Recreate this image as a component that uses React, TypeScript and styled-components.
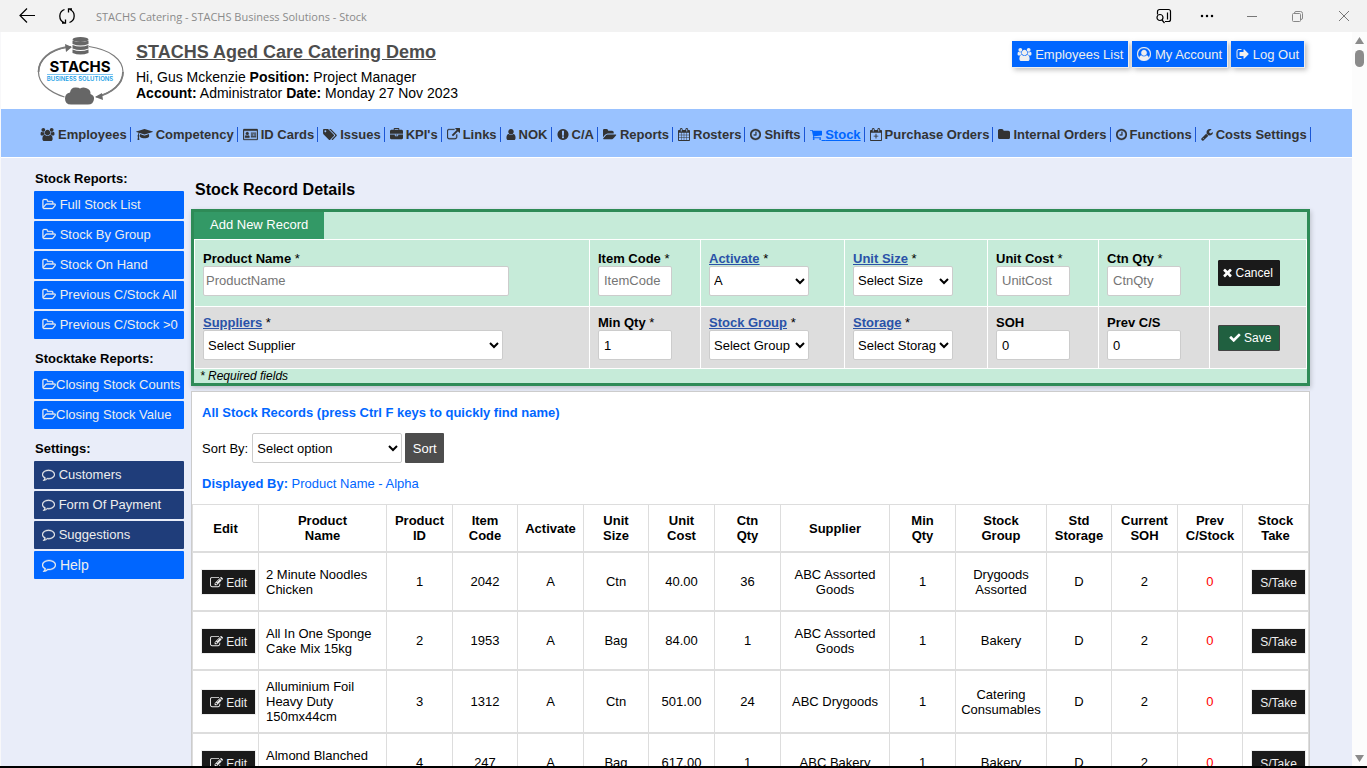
import React from 'react';
import styled, { createGlobalStyle, css } from 'styled-components';

const GlobalStyle = createGlobalStyle`
  *, *::before, *::after { box-sizing: border-box; }
  html, body { margin: 0; padding: 0; }
  body {
    font-family: "Liberation Sans", Arial, sans-serif;
    font-size: 13px;
    line-height: 15px;
    color: #000;
    background: #e9edf9;
    overflow: hidden;
  }
  button, input, select { font-family: inherit; font-size: 13px; }
`;

/* ---------- icons ---------- */

type Glyph = { x: number; w: number; d: string; evenOdd?: boolean; outline?: number };

const glyphs: Record<string, Glyph> = {
  users: { x: 0, w: 2048, d: 'M657 896q-162 5-265 128h-134q-82 0-138-40.5t-56-118.5q0-353 124-353 6 0 43.5 21t97.5 42.5 119 21.5q67 0 133-23-5 37-5 66 0 159 93 256zm1071 637q0 120-73 189.5t-194 69.5h-874q-121 0-194-69.5t-73-189.5q0-53 3.5-103.5t14-109 26.5-108.5 43-97.5 62-81 85.5-53.5 111.5-20q10 0 43 21.5t73 48 107 48 135 21.5 135-21.5 107-48 73-48 43-21.5q61 0 111.5 20t85.5 53.5 62 81 43 97.5 26.5 108.5 14 109 3.5 103.5zm-1024-1277q0 106-75 181t-181 75-181-75-75-181 75-181 181-75 181 75 75 181zm704 384q0 159-112.5 271.5t-271.5 112.5-271.5-112.5-112.5-271.5 112.5-271.5 271.5-112.5 271.5 112.5 112.5 271.5zm576 225q0 78-56 118.5t-138 40.5h-134q-103-123-265-128 93-97 93-256 0-29-5-66 66 23 133 23 59 0 119-21.5t97.5-42.5 43.5-21q124 0 124 353zm-128-609q0 106-75 181t-181 75-181-75-75-181 75-181 181-75 181 75 75 181z' },
  gradCap: { x: 0, w: 2304, d: 'M1774 836l18 316q4 69-82 128t-235 93.5-323 34.5-323-34.5-235-93.5-82-128l18-316 574 181q22 7 48 7t48-7zm530-324q0 23-22 31l-1120 352q-4 1-10 1t-10-1l-652-206q-43 34-71 111.5t-34 178.5q63 36 63 109 0 69-58 107l58 433q2 14-8 25-9 11-24 11h-192q-15 0-24-11-10-11-8-25l58-433q-58-38-58-107 0-73 65-111 11-207 98-330l-333-104q-22-8-22-31t22-31l1120-352q4-1 10-1t10 1l1120 352q22 8 22 31z' },
  idCard: { x: 0, w: 2048, evenOdd: true, outline: 40, d: 'M160 128h1728q66 0 113 47t47 113v1216q0 66-47 113t-113 47h-1728q-66 0-113-47t-47-113v-1216q0-66 47-113t113-47zM128 384v1120q0 32 32 32h1728q32 0 32-32v-1120zM256 1256q0-230 140-270 80 74 180 74t180-74q140 40 140 270 0 88-80 88h-480q-80 0-80-88zM576 560a208 208 0 1 0 1 0zM1088 1152h704v128h-704zM1088 896h320v128h-320zM1536 896h256v128h-256zM1088 640h704v128h-704z' },
  tags: { x: 0, w: 1920, d: 'M448 448q0-53-37.5-90.5t-90.5-37.5-90.5 37.5-37.5 90.5 37.5 90.5 90.5 37.5 90.5-37.5 37.5-90.5zm1067 576q0 53-37 90l-491 492q-39 37-91 37-53 0-90-37l-715-716q-38-37-64.5-101t-26.5-117v-416q0-52 38-90t90-38h416q53 0 117 26.5t102 64.5l715 714q37 39 37 91zm384 0q0 53-37 90l-491 492q-39 37-91 37-36 0-59-14t-53-45l470-470q37-37 37-90 0-52-37-91l-715-714q-38-38-102-64.5t-117-26.5h224q53 0 117 26.5t102 64.5l715 714q37 39 37 91z' },
  briefcase: { x: 0, w: 1792, d: 'M640 256h512v-128h-512v128zm1152 640v480q0 66-47 113t-113 47h-1472q-66 0-113-47t-47-113v-480h672v160q0 26 19 45t45 19h320q26 0 45-19t19-45v-160h672zm-768 0v128h-256v-128h256zm768-480v384h-1792v-384q0-66 47-113t113-47h352v-160q0-40 28-68t68-28h576q40 0 68 28t28 68v160h352q66 0 113 47t47 113z' },
  link: { x: 0, w: 1792, outline: 40, d: 'M1408 928v320q0 119-84.5 203.5t-203.5 84.5h-832q-119 0-203.5-84.5t-84.5-203.5v-832q0-119 84.5-203.5t203.5-84.5h704q14 0 23 9t9 23v64q0 14-9 23t-23 9h-704q-66 0-113 47t-47 113v832q0 66 47 113t113 47h832q66 0 113-47t47-113v-320q0-14 9-23t23-9h64q14 0 23 9t9 23zm384-864v512q0 26-19 45t-45 19-45-19l-176-176-652 652q-10 10-23 10t-23-10l-114-114q-10-10-10-23t10-23l652-652-176-176q-19-19-19-45t19-45 45-19h512q26 0 45 19t19 45z' },
  user: { x: 192, w: 1408, d: 'M1536 1399q0 109-62.5 187t-150.5 78h-854q-88 0-150.5-78t-62.5-187q0-85 8.5-160.5t31.5-152 58.5-131 94-89 134.5-34.5q131 128 313 128t313-128q76 0 134.5 34.5t94 89 58.5 131 31.5 152 8.5 160.5zm-256-887q0 159-112.5 271.5t-271.5 112.5-271.5-112.5-112.5-271.5 112.5-271.5 271.5-112.5 271.5 112.5 112.5 271.5z' },
  alert: { x: 64, w: 1664, d: 'M896 128q209 0 385.5 103t279.5 279.5 103 385.5-103 385.5-279.5 279.5-385.5 103-385.5-103-279.5-279.5-103-385.5 103-385.5 279.5-279.5 385.5-103zm128 1247v-190q0-14-9-23.5t-22-9.5h-192q-13 0-23 10t-10 23v190q0 13 10 23t23 10h192q13 0 22-9.5t9-23.5zm-2-344l18-621q0-12-10-18-10-8-24-8h-220q-14 0-24 8-10 6-10 18l17 621q0 10 10 17.5t24 7.5h185q14 0 23.5-7.5t10.5-17.5z' },
  folderOpen: { x: 0, w: 1920, d: 'M1815 952q0 31-31 66l-336 396q-43 51-120.5 86.5t-143.5 35.5h-1088q-34 0-60.5-13t-26.5-43q0-31 31-66l336-396q43-51 120.5-86.5t143.5-35.5h1088q34 0 60.5 13t26.5 43zm-343-344v160h-832q-94 0-197 47.5t-164 119.5l-337 396-5 6q0-4-.5-12.5t-.5-12.5v-960q0-92 66-158t158-66h320q92 0 158 66t66 158v32h544q92 0 158 66t66 158z' },
  folder: { x: 64, w: 1664, d: 'M1728 608v704q0 92-66 158t-158 66h-1216q-92 0-158-66t-66-158v-960q0-92 66-158t158-66h320q92 0 158 66t66 158v32h672q92 0 158 66t66 158z' },
  folderOutline: { x: 0, w: 1984, outline: 50, d: 'M1845 931q0-35-53-35h-1088q-40 0-85.5 21.5t-71.5 52.5l-294 363q-18 24-18 40 0 35 53 35h1088q40 0 86-22t71-53l294-363q18-22 18-39zm-1141-163h768v-160q0-40-28-68t-68-28h-576q-40 0-68-28t-28-68v-64q0-40-28-68t-68-28h-320q-40 0-68 28t-28 68v853l256-315q44-53 116-87.5t140-34.5zm1269 163q0 62-46 120l-295 363q-43 53-116 87.5t-140 34.5h-1088q-92 0-158-66t-66-158v-960q0-92 66-158t158-66h320q92 0 158 66t66 158v32h544q92 0 158 66t66 158v160h192q54 0 99 24.5t67 70.5q15 32 15 68z' },
  calendar: { x: 64, w: 1664, evenOdd: true, d: 'M192 256h128v-96q0-66 47-113t113-47h64q66 0 113 47t47 113v96h384v-96q0-66 47-113t113-47h64q66 0 113 47t47 113v96h128q52 0 90 38t38 90v1280q0 52-38 90t-90 38h-1408q-52 0-90-38t-38-90v-1280q0-52 38-90t90-38zM192 1664h288v-288h-288zM544 1664h320v-288h-320zM928 1664h320v-288h-320zM1312 1664h288v-288h-288zM192 1312h288v-320h-288zM544 1312h320v-320h-320zM928 1312h320v-320h-320zM1312 1312h288v-320h-288zM192 928h288v-288h-288zM544 928h320v-288h-320zM928 928h320v-288h-320zM1312 928h288v-288h-288zM448 160v288q0 32 32 32h64q32 0 32-32v-288q0-32-32-32h-64q-32 0-32 32zM1216 160v288q0 32 32 32h64q32 0 32-32v-288q0-32-32-32h-64q-32 0-32 32z' },
  calendarPlus: { x: 64, w: 1664, evenOdd: true, d: 'M192 256h128v-96q0-66 47-113t113-47h64q66 0 113 47t47 113v96h384v-96q0-66 47-113t113-47h64q66 0 113 47t47 113v96h128q52 0 90 38t38 90v1280q0 52-38 90t-90 38h-1408q-52 0-90-38t-38-90v-1280q0-52 38-90t90-38zM192 640v1024h1408v-1024zM448 160v288q0 32 32 32h64q32 0 32-32v-288q0-32-32-32h-64q-32 0-32 32zM1216 160v288q0 32 32 32h64q32 0 32-32v-288q0-32-32-32h-64q-32 0-32 32zM832 800h128v256h256v128h-256v256h-128v-256h-256v-128h256z' },
  clock: { x: 128, w: 1536, outline: 40, d: 'M1024 544v448q0 14-9 23t-23 9h-320q-14 0-23-9t-9-23v-64q0-14 9-23t23-9h224v-352q0-14 9-23t23-9h64q14 0 23 9t9 23zm416 352q0-148-73-273t-198-198-273-73-273 73-198 198-73 273 73 273 198 198 273 73 273-73 198-198 73-273zm224 0q0 209-103 385.5t-279.5 279.5-385.5 103-385.5-103-279.5-279.5-103-385.5 103-385.5 279.5-279.5 385.5-103 385.5 103 279.5 279.5 103 385.5z' },
  cart: { x: 64, w: 1664, d: 'M704 1536q0 52-38 90t-90 38-90-38-38-90 38-90 90-38 90 38 38 90zm896 0q0 52-38 90t-90 38-90-38-38-90 38-90 90-38 90 38 38 90zm128-1088v512q0 24-16.5 42.5t-40.5 21.5l-1044 122q13 60 13 70 0 16-24 64h920q26 0 45 19t19 45-19 45-45 19h-1024q-26 0-45-19t-19-45q0-11 8-31.5t16-36 21.5-40 15.5-29.5l-177-823h-204q-26 0-45-19t-19-45 19-45 45-19h256q16 0 28.5 6.5t19.5 15.5 13 24.5 8 26 5.5 29.5 4.5 26h1201q26 0 45 19t19 45z' },
  wrench: { x: 64, w: 1664, d: 'M448 1472q0-26-19-45t-45-19-45 19-19 45 19 45 45 19 45-19 19-45zm644-420l-682 682q-37 37-90 37-52 0-91-37l-106-108q-38-36-38-90 0-53 38-91l681-681q39 98 114.5 173.5t173.5 114.5zm634-435q0 39-23 106-47 134-164.5 217.5t-258.5 83.5q-185 0-316.5-131.5t-131.5-316.5 131.5-316.5 316.5-131.5q58 0 121.5 16.5t107.5 46.5q16 11 16 28t-16 28l-293 169v224l193 107q5-3 79-48.5t135.5-81 70.5-35.5q15 0 23.5 10t8.5 25z' },
  comment: { x: 0, w: 1792, outline: 50, d: 'M896 384q-204 0-381.5 69.5t-282 187.5-104.5 255q0 112 71.5 213.5t201.5 175.5l87 50-27 96q-24 91-70 172 152-63 275-171l43-38 57 6q69 8 130 8 204 0 381.5-69.5t282-187.5 104.5-255-104.5-255-282-187.5-381.5-69.5zm896 512q0 174-120 321.5t-326 233-450 85.5q-70 0-145-8-198 175-460 242-49 14-114 22h-5q-15 0-27-10.5t-16-27.5v-1q-3-4-.5-12t2-10 4.5-9.5l6-9 7-8.5 8-9q7-8 31-34.5t34.5-38 31-39.5 32.5-51 27-59 26-76q-157-89-247.5-220t-90.5-281q0-130 71-248.5t191-204.5 286-136.5 348-50.5 348 50.5 286 136.5 191 204.5 71 248.5z' },
  edit: { x: 0, w: 1792, d: 'M888 1184l116-116-152-152-116 116v56h96v96h56zm440-720q-16-16-33 1l-350 350q-17 17-1 33t33-1l350-350q17-17 1-33zm80 594v190q0 119-84.5 203.5t-203.5 84.5h-832q-119 0-203.5-84.5t-84.5-203.5v-832q0-119 84.5-203.5t203.5-84.5h832q63 0 117 25 15 7 18 23 3 17-9 29l-49 49q-14 14-32 8-23-6-45-6h-832q-66 0-113 47t-47 113v832q0 66 47 113t113 47h832q66 0 113-47t47-113v-126q0-13 9-22l64-64q15-15 35-7t20 29zm-96-738l288 288-672 672h-288v-288zm444 132l-92 92-288-288 92-92q28-28 68-28t68 28l152 152q28 28 28 68t-28 68z' },
  check: { x: 64, w: 1664, d: 'M1671 566q0 40-28 68l-724 724-136 136q-28 28-68 28t-68-28l-136-136-362-362q-28-28-28-68t28-68l136-136q28-28 68-28t68 28l294 295 656-657q28-28 68-28t68 28l136 136q28 28 28 68z' },
  times: { x: 256, w: 1280, d: 'M1490 1322q0 40-28 68l-136 136q-28 28-68 28t-68-28l-294-294-294 294q-28 28-68 28t-68-28l-136-136q-28-28-28-68t28-68l294-294-294-294q-28-28-28-68t28-68l136-136q28-28 68-28t68 28l294 294 294-294q28-28 68-28t68 28l136 136q28 28 28 68t-28 68l-294 294 294 294q28 28 28 68z' },
  signOut: { x: 0, w: 1664, d: 'M704 1440q0 4 1 20t.5 26.5-3 23.5-10 19.5-20.5 6.5h-320q-119 0-203.5-84.5t-84.5-203.5v-704q0-119 84.5-203.5t203.5-84.5h320q13 0 22.5 9.5t9.5 22.5q0 4 1 20t.5 26.5-3 23.5-10 19.5-20.5 6.5h-320q-66 0-113 47t-47 113v704q0 66 47 113t113 47h312l11.5 1 11.5 3 8 5.5 7 9 2 13.5zm928-544q0 26-19 45l-544 544q-19 19-45 19t-45-19-19-45v-288h-448q-26 0-45-19t-19-45v-384q0-26 19-45t45-19h448v-288q0-26 19-45t45-19 45 19l544 544q19 19 19 45z' },
  userCircle: { x: 0, w: 1792, evenOdd: true, outline: 40, d: 'M896 0a896 896 0 1 0 1 0zM896 128a768 768 0 0 1 600 1247q-70-303-274-303-130 128-326 128t-326-128q-204 0-274 303a768 768 0 0 1 600-1247zM896 384a352 352 0 1 0 1 0z' },
};

const Svg = styled.svg`
  flex: none;
  vertical-align: -2px;
  fill: currentColor;
  stroke: currentColor;
`;

function Icon({ name, size = 13 }: { name: string; size?: number }) {
  const g = glyphs[name];
  return (
    <Svg
      width={Math.round((g.w / 1792) * size)}
      height={size}
      viewBox={`${g.x} 0 ${g.w} 1792`}
      strokeWidth={g.outline ?? 0}
      aria-hidden="true"
    >
      <path d={g.d} fillRule={g.evenOdd ? 'evenodd' : 'nonzero'} />
    </Svg>
  );
}

/* ---------- window frame ---------- */

const Window = styled.div`
  height: 100vh;
  display: flex;
  flex-direction: column;
  overflow: hidden;
  border-bottom: 2px solid #000;
`;

const TitleBar = styled.div`
  flex: none;
  display: flex;
  align-items: center;
  height: 32px;
  padding: 0 17px 0 19px;
  background: #f2f2f2;
`;

const FrameButton = styled.button<{ $gap: number }>`
  display: flex;
  align-items: center;
  padding: 0;
  margin: 0 ${(p) => p.$gap}px 0 0;
  border: 0;
  background: none;
  svg { fill: none; stroke: currentColor; }
`;

const WindowTitle = styled.span`
  flex: 1;
  font-family: "Open Sans", "Noto Sans", sans-serif;
  font-size: 11px;
  color: #8a8a8a;
  white-space: nowrap;
`;

const Viewport = styled.div`
  flex: 1;
  min-height: 0;
  display: flex;
`;

const Page = styled.div`
  flex: 1;
  min-width: 0;
  overflow: hidden;
  border-left: 1px solid #f8f8fa;
`;

const ScrollTrack = styled.div`
  flex: none;
  width: 15px;
  display: flex;
  flex-direction: column;
  align-items: center;
  padding: 5px 0 4px;
  background: #fcfcfc;
`;

const ScrollThumb = styled.div`
  width: 9px;
  height: 17px;
  margin: 6px 0 auto;
  border-radius: 5px;
  background: #8b8b8b;
`;

/* ---------- page header ---------- */

const Header = styled.header`
  display: flex;
  align-items: flex-start;
  height: 77px;
  padding: 5px 47px 0 36px;
  background: #fff;
`;

const Identity = styled.div`
  flex: 1;
  margin: 5px 0 0 12px;
  font-size: 14px;
  line-height: 16px;
  white-space: nowrap;
`;

const SiteTitle = styled.h1`
  margin: 0 0 6px;
  font-size: 18px;
  line-height: 21px;
  a { color: #4d4d4d; }
`;

const HeaderActions = styled.div`
  display: flex;
  gap: 3px;
  padding-top: 4px;
`;

const HeaderButton = styled.a`
  height: 27px;
  padding: 6px 5px 0;
  border-right: 1px solid #eee;
  border-bottom: 1px solid #eee;
  background: #06f;
  box-shadow: 2px 2px 5px rgba(0, 0, 0, 0.25);
  color: #eee;
  text-decoration: none;
  white-space: nowrap;
`;

const Nav = styled.nav`
  display: flex;
  height: 49px;
  padding: 18px 0 0 34px;
  border-bottom: 1px solid #fff;
  background: #99c2ff;
`;

const NavLink = styled.a<{ $active?: boolean }>`
  display: ${(p) => (p.$active ? 'block' : 'flex')};
  align-items: center;
  gap: 3px;
  height: 15px;
  padding: 0 3px 0 5px;
  border-right: 1px solid #1a56d6;
  font-weight: bold;
  white-space: nowrap;
  color: ${(p) => (p.$active ? '#0066ff' : '#333')};
  text-decoration: ${(p) => (p.$active ? 'underline' : 'none')};
`;

/* ---------- body ---------- */

const Body = styled.div`
  display: flex;
  padding: 12px 42px 0 33px;
`;

const Sidebar = styled.aside`
  flex: none;
  width: 150px;
  margin-right: 7px;
`;

const SideHeading = styled.h2`
  margin: 0;
  padding: 1px 1px 5px;
  font-size: 13px;
  line-height: 15px;
`;

const SideGroup = styled.section`
  margin-bottom: 11px;
`;

const SideLink = styled.a<{ $dark?: boolean }>`
  display: block;
  height: 28px;
  margin-bottom: 2px;
  padding: 6px 0 0 8px;
  border-radius: 1px;
  background: ${(p) => (p.$dark ? '#1f3d7a' : '#0066ff')};
  color: #eee;
  text-decoration: none;
  white-space: nowrap;
`;

const HelpLink = styled(SideLink)`
  font-size: 14px;
  line-height: 16px;
`;

const Main = styled.main`
  flex: 1;
  min-width: 0;
`;

const PageHeading = styled.h2`
  margin: 0;
  padding: 11px 4px 10px;
  font-size: 16px;
  line-height: 18px;
`;

const FormPanel = styled.form`
  border: 3px solid #2e8b57;
  background: #c6ebd9;
  box-shadow: 1px 2px 5px rgba(0, 0, 0, 0.2);
`;

const FormTab = styled.div`
  width: 130px;
  height: 27px;
  padding: 5px 0 0 16px;
  background: #396;
  color: #fff;
`;

const FormGrid = styled.div`
  display: grid;
  grid-template-columns: 394fr 110fr 143fr 142fr 110fr 110fr 96fr;
  grid-template-rows: 66px 61px;
  gap: 1px;
  border: 1px solid #fff;
  background: #fff;
`;

const Cell = styled.div<{ $alt?: boolean }>`
  display: flex;
  flex-direction: column;
  align-items: flex-start;
  justify-content: center;
  min-width: 0;
  padding-left: 8px;
  background: ${(p) => (p.$alt ? '#dddddd' : '#c6ebd9')};
`;

const FieldLabel = styled.label`
  white-space: nowrap;
  a, span { font-weight: bold; }
  a { color: #2a52a8; }
`;

const control = css`
  height: 30px;
  margin: 0;
  border: 1px solid #ccc;
  border-radius: 2px;
  background-color: #fff;
  color: #000;
`;

const TextInput = styled.input<{ $w: number; $pad?: number }>`
  ${control}
  width: ${(p) => p.$w}px;
  padding: 0 ${(p) => p.$pad ?? 5}px;
  &::placeholder { color: #757575; }
`;

const Select = styled.select<{ $w: number }>`
  ${control}
  width: ${(p) => p.$w}px;
`;

const FormButton = styled.button<{ $save?: boolean }>`
  width: 62px;
  height: 26px;
  padding: ${(p) => (p.$save ? '0 0 0 2px' : '0 2px 0 0')};
  border: 1px solid ${(p) => (p.$save ? '#444' : '#1a1a1a')};
  border-radius: 1px;
  background: ${(p) => (p.$save ? '#206040' : '#1a1a1a')};
  color: #fff;
  font-size: 12px;
`;

const FormNote = styled.p`
  margin: 0;
  padding-left: 6px;
  height: 14px;
  font-size: 12px;
  line-height: 14px;
  font-style: italic;
`;

const Records = styled.section`
  margin-top: 5px;
  border: 1px solid #ccc;
  background: #fff;
`;

const RecordsHead = styled.div`
  padding: 13px 10px 0;
  height: 112px;
`;

const RecordsTitle = styled.h3`
  margin: 0;
  font-size: 13px;
  line-height: 15px;
  color: #06f;
`;

const SortRow = styled.div`
  display: flex;
  align-items: center;
  margin: 13px 0;
`;

const SortLabel = styled.label`
  margin-right: 4px;
`;

const SortButton = styled.button`
  width: 39px;
  height: 30px;
  margin-left: 3px;
  padding: 0;
  border: 0;
  border-radius: 1px;
  background: #4d4d4d;
  color: #fff;
`;

const Displayed = styled.p`
  margin: 0;
  color: #06f;
`;

const Table = styled.table`
  width: 100%;
  table-layout: fixed;
  border-collapse: separate;
  border-spacing: 0;
  border-left: 1px solid #ddd;
  border-top: 1px solid #ddd;
  text-align: center;
`;

const Th = styled.th<{ $share: number }>`
  width: ${(p) => (p.$share / 1116) * 100}%;
  height: 48px;
  padding: 0;
  border-right: 1px solid #ddd;
  border-bottom: 2px solid #ddd;
`;

const Td = styled.td<{ $red?: boolean; $left?: boolean }>`
  height: 59px;
  padding: ${(p) => (p.$left ? '8px 7px' : '8px 0')};
  border-right: 1px solid #ddd;
  border-bottom: 2px solid #ddd;
  text-align: ${(p) => (p.$left ? 'left' : 'center')};
  color: ${(p) => (p.$red ? '#f00' : '#000')};
`;

const RowButton = styled.button`
  display: block;
  width: 55px;
  height: 26px;
  margin: 1px 0 0 8px;
  padding: 1px 0 0;
  border: 1px solid #eee;
  background: #1a1a1a;
  color: #eee;
  font-size: 12px;
`;

/* ---------- data ---------- */

const navItems: [string, string][] = [
  ['users', 'Employees'], ['gradCap', 'Competency'], ['idCard', 'ID Cards'], ['tags', 'Issues'],
  ['briefcase', "KPI's"], ['link', 'Links'], ['user', 'NOK'], ['alert', 'C/A'],
  ['folderOpen', 'Reports'], ['calendar', 'Rosters'], ['clock', 'Shifts'], ['cart', 'Stock'],
  ['calendarPlus', 'Purchase Orders'], ['folder', 'Internal Orders'], ['clock', 'Functions'],
  ['wrench', 'Costs Settings'],
];

const columns: [string[], number][] = [
  [['Edit'], 66], [['Product', 'Name'], 128], [['Product', 'ID'], 66], [['Item', 'Code'], 65],
  [['Activate'], 66], [['Unit', 'Size'], 65], [['Unit', 'Cost'], 66], [['Ctn', 'Qty'], 66],
  [['Supplier'], 109], [['Min', 'Qty'], 66], [['Stock', 'Group'], 91], [['Std', 'Storage'], 65],
  [['Current', 'SOH'], 66], [['Prev', 'C/Stock'], 65], [['Stock', 'Take'], 66],
];

const records = [
  { name: ['2 Minute Noodles', 'Chicken'], cells: ['1', '2042', 'A', 'Ctn', '40.00', '36'], supplier: ['ABC Assorted', 'Goods'], group: ['Drygoods', 'Assorted'] },
  { name: ['All In One Sponge', 'Cake Mix 15kg'], cells: ['2', '1953', 'A', 'Bag', '84.00', '1'], supplier: ['ABC Assorted', 'Goods'], group: ['Bakery'] },
  { name: ['Alluminium Foil', 'Heavy Duty', '150mx44cm'], cells: ['3', '1312', 'A', 'Ctn', '501.00', '24'], supplier: ['ABC Drygoods'], group: ['Catering', 'Consumables'] },
  { name: ['Almond Blanched', 'Flakes Thin 3kg'], cells: ['4', '247', 'A', 'Bag', '617.00', '1'], supplier: ['ABC Bakery'], group: ['Bakery'] },
];

const Lines = ({ text }: { text: string[] }) => (
  <>
    {text.map((t, i) => (
      <React.Fragment key={t}>
        {i > 0 && <br />}
        {t}
      </React.Fragment>
    ))}
  </>
);

type FieldProps = {
  id: string; label: string; width: number; required?: boolean; link?: boolean;
  option?: string; placeholder?: string; value?: string; pad?: number; alt?: boolean;
};

function Field({ id, label, width, required = true, link, option, placeholder, value, pad, alt }: FieldProps) {
  return (
    <Cell $alt={alt}>
      <FieldLabel htmlFor={id}>
        {link ? <a href={`#${id}`}>{label}</a> : <span>{label}</span>}
        {required && ' *'}
      </FieldLabel>
      {option ? (
        <Select id={id} $w={width}><option>{option}</option></Select>
      ) : (
        <TextInput id={id} $w={width} $pad={pad} placeholder={placeholder} defaultValue={value} />
      )}
    </Cell>
  );
}

function Logo() {
  return (
    <svg width="87" height="68" viewBox="0 0 87 68" role="img" aria-label="STACHS Business Solutions">
      <g fill="none" stroke="#7c7c7c">
        <path d="M34 9.500C14 12 1.500 22 1.500 35c0 11 10 20 26 25" strokeWidth="1.200" />
        <path d="M52 9.500c21 3 34 13 34 25.500 0 12-11 21-27 25" strokeWidth="1.200" />
        <path d="M30 10C12 13 1.500 23 1.500 35M86 35c0 12-11 21-25 24.500" strokeWidth="1.800" />
      </g>
      <path d="M28 7l7 3-6 5zM65 56l-7 4 8 3z" fill="#6b6b6b" />
      <g fill="#666">
        <ellipse cx="43.500" cy="2.500" rx="8" ry="2.500" />
        <path d="M35.500 3.500q8 3 16 0v3.500q-8 3-16 0zM35.500 8q8 3 16 0v3.500q-8 3-16 0zM35.500 12.500q8 3 16 0v3.500q-8 3-16 0z" />
        <path d="M34 67.500q-6 0-6-6 0-5 5-6 1-5.500 6-5 3 0 4 1 3-1.500 6-.5 5 1.500 4.500 6 4 1.500 3.500 5-.5 5.500-6 5.500z" />
      </g>
      <text x="43" y="35" textAnchor="middle" fontFamily="Inter, sans-serif" fontWeight="700" fontSize="15" fill="#000">STACHS</text>
      <path d="M10 37.500h66" stroke="#7cc4f0" />
      <text x="43" y="44" textAnchor="middle" fontFamily="Inter, sans-serif" fontWeight="600" fontSize="6" fill="#1ba1e6">BUSINESS SOLUTIONS</text>
    </svg>
  );
}

const folders = ['Full Stock List', 'Stock By Group', 'Stock On Hand', 'Previous C/Stock All', 'Previous C/Stock >0'];

export default function App() {
  return (
    <Window>
      <GlobalStyle />
      <TitleBar>
        <FrameButton $gap={24} aria-label="Back">
          <svg width="16" height="16" viewBox="0 0 16 16" strokeWidth="1.200"><path d="M16 7.500H1M8 .5l-7 7 7 7" /></svg>
        </FrameButton>
        <FrameButton $gap={21} aria-label="Refresh">
          <svg width="16" height="18" viewBox="0 0 16 18" strokeWidth="1.300">
            <path d="M5 15.500A7 7 0 0 1 5.500 2.500M11 2.500a7 7 0 0 1-.5 13M9.500 5.500v-3.500h3.500M6.500 12.500v3.500H3" />
          </svg>
        </FrameButton>
        <WindowTitle>STACHS Catering - STACHS Business Solutions - Stock</WindowTitle>
        <FrameButton $gap={28} aria-label="Search in sidebar">
          <svg width="16" height="16" viewBox="0 0 16 16" strokeWidth="1.200">
            <path d="M1.500 6.500V3.500a2 2 0 0 1 2-2h9a2 2 0 0 1 2 2v8a2 2 0 0 1-2 2H9M11.500 4.500v7M6 12l2.500 3" />
            <circle cx="4" cy="9.500" r="3" />
          </svg>
        </FrameButton>
        <FrameButton $gap={33} aria-label="More">
          <svg width="14" height="4" viewBox="0 0 14 4" strokeWidth="2.500" strokeLinecap="round"><path d="M2 2h0M7 2h0M12 2h0" /></svg>
        </FrameButton>
        <FrameButton $gap={35} aria-label="Minimise">
          <svg width="10" height="10" viewBox="0 0 10 10"><path d="M0 5.500h10" stroke="#777" /></svg>
        </FrameButton>
        <FrameButton $gap={35} aria-label="Restore">
          <svg width="11" height="11" viewBox="0 0 11 11"><path d="M2.500 2q0-1.500 1.500-1.500h4.500q2 0 2 2V7q0 1.500-1.500 1.500M1.500 2.500h6q1 0 1 1v6q0 1-1 1h-6q-1 0-1-1v-6q0-1 1-1z" stroke="#888" /></svg>
        </FrameButton>
        <FrameButton $gap={0} aria-label="Close">
          <svg width="12" height="12" viewBox="0 0 12 12"><path d="M1 1l10 10M11 1L1 11" stroke="#777" /></svg>
        </FrameButton>
      </TitleBar>

      <Viewport>
        <Page>
          <Header>
            <Logo />
            <Identity>
              <SiteTitle><a href="#home">STACHS Aged Care Catering Demo</a></SiteTitle>
              Hi, Gus Mckenzie <b>Position:</b> Project Manager<br />
              <b>Account:</b> Administrator <b>Date:</b> Monday 27 Nov 2023
            </Identity>
            <HeaderActions>
              <HeaderButton href="#employees"><Icon name="users" /> Employees List</HeaderButton>
              <HeaderButton href="#account"><Icon name="userCircle" size={14} /> My Account</HeaderButton>
              <HeaderButton href="#logout"><Icon name="signOut" size={14} /> Log Out</HeaderButton>
            </HeaderActions>
          </Header>

          <Nav>
            {navItems.map(([icon, label]) => (
              <NavLink key={label} href={`#${icon}`} $active={label === 'Stock'}>
                <Icon name={icon} /> {label}
              </NavLink>
            ))}
          </Nav>

          <Body>
            <Sidebar>
              <SideGroup>
                <SideHeading>Stock Reports:</SideHeading>
                {folders.map((f) => (
                  <SideLink key={f} href="#report"><Icon name="folderOutline" /> {f}</SideLink>
                ))}
              </SideGroup>
              <SideGroup>
                <SideHeading>Stocktake Reports:</SideHeading>
                {['Closing Stock Counts', 'Closing Stock Value'].map((f) => (
                  <SideLink key={f} href="#closing"><Icon name="folderOutline" />{f}</SideLink>
                ))}
              </SideGroup>
              <SideGroup>
                <SideHeading>Settings:</SideHeading>
                {['Customers', 'Form Of Payment', 'Suggestions'].map((f) => (
                  <SideLink key={f} href="#settings" $dark><Icon name="comment" /> {f}</SideLink>
                ))}
                <HelpLink href="#help"><Icon name="comment" size={14} /> Help</HelpLink>
              </SideGroup>
            </Sidebar>

            <Main>
              <PageHeading>Stock Record Details</PageHeading>
              <FormPanel onSubmit={(e) => e.preventDefault()}>
                <FormTab>Add New Record</FormTab>
                <FormGrid>
                  <Field id="name" label="Product Name" width={306} pad={2} placeholder="ProductName" />
                  <Field id="code" label="Item Code" width={74} placeholder="ItemCode" />
                  <Field id="activate" label="Activate" width={100} link option="A" />
                  <Field id="size" label="Unit Size" width={100} link option="Select Size" />
                  <Field id="cost" label="Unit Cost" width={74} placeholder="UnitCost" />
                  <Field id="ctn" label="Ctn Qty" width={74} placeholder="CtnQty" />
                  <Cell><FormButton type="button"><Icon name="times" /> Cancel</FormButton></Cell>
                  <Field alt id="supplier" label="Suppliers" width={300} link option="Select Supplier" />
                  <Field alt id="min" label="Min Qty" width={74} value="1" />
                  <Field alt id="group" label="Stock Group" width={100} link option="Select Group" />
                  <Field alt id="storage" label="Storage" width={100} link option="Select Storage" />
                  <Field alt id="soh" label="SOH" width={74} required={false} value="0" />
                  <Field alt id="prev" label="Prev C/S" width={74} required={false} value="0" />
                  <Cell $alt><FormButton $save type="submit"><Icon name="check" /> Save</FormButton></Cell>
                </FormGrid>
                <FormNote>* Required fields</FormNote>
              </FormPanel>

              <Records>
                <RecordsHead>
                  <RecordsTitle>All Stock Records (press Ctrl F keys to quickly find name)</RecordsTitle>
                  <SortRow>
                    <SortLabel htmlFor="sort">Sort By:</SortLabel>
                    <Select id="sort" $w={150}><option>Select option</option></Select>
                    <SortButton type="button">Sort</SortButton>
                  </SortRow>
                  <Displayed><b>Displayed By:</b> Product Name - Alpha</Displayed>
                </RecordsHead>
                <Table>
                  <thead>
                    <tr>
                      {columns.map(([label, share]) => (
                        <Th key={label.join()} $share={share}><Lines text={label} /></Th>
                      ))}
                    </tr>
                  </thead>
                  <tbody>
                    {records.map((r) => (
                      <tr key={r.cells[0]}>
                        <Td><RowButton><Icon name="edit" /> Edit</RowButton></Td>
                        <Td $left><Lines text={r.name} /></Td>
                        {r.cells.map((c, i) => <Td key={i}>{c}</Td>)}
                        <Td><Lines text={r.supplier} /></Td>
                        <Td>1</Td>
                        <Td><Lines text={r.group} /></Td>
                        <Td>D</Td>
                        <Td>2</Td>
                        <Td $red>0</Td>
                        <Td><RowButton>S/Take</RowButton></Td>
                      </tr>
                    ))}
                  </tbody>
                </Table>
              </Records>
            </Main>
          </Body>
        </Page>
        <ScrollTrack>
          <svg width="9" height="7" viewBox="0 0 9 7"><path d="M4.500 0L9 7H0z" fill="#8b8b8b" /></svg>
          <ScrollThumb />
          <svg width="9" height="7" viewBox="0 0 9 7"><path d="M4.500 7L9 0H0z" fill="#8b8b8b" /></svg>
        </ScrollTrack>
      </Viewport>
    </Window>
  );
}
